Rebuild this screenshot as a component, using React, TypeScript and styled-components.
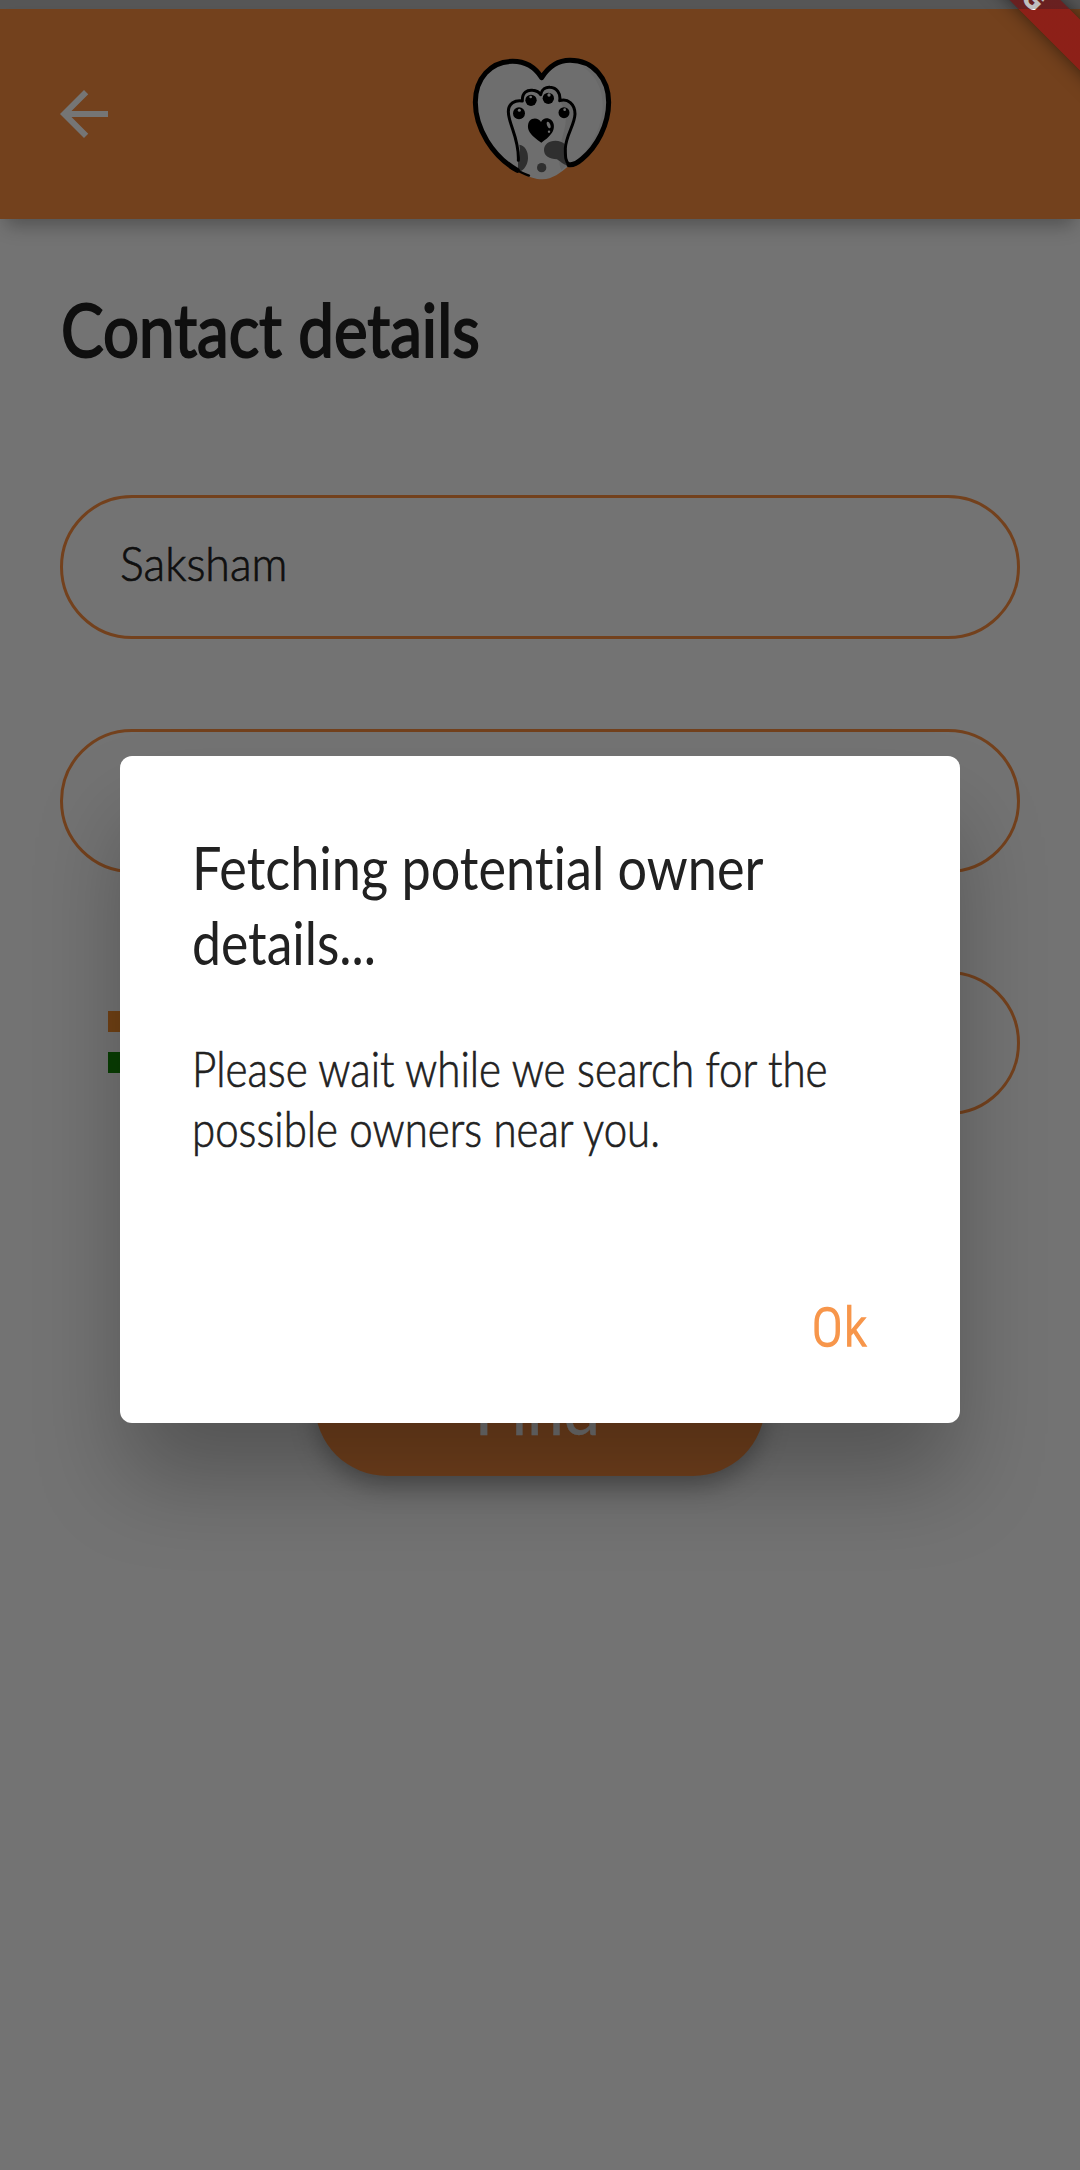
import React from "react";
import styled, { createGlobalStyle } from "styled-components";

const orange = "#fb8e3f";

const GlobalStyle = createGlobalStyle`
  * { box-sizing: border-box; }
  html, body { margin: 0; padding: 0; }
  body {
    background: #fafafa;
    font-family: Lato, "Open Sans", sans-serif;
    font-variant-ligatures: none;
    color: #212121;
    overflow: hidden;
  }
  button { font: inherit; border: 0; padding: 0; background: none; }
`;

const Screen = styled.div`
  position: relative;
  width: 1080px;
  height: 2170px;
  padding-top: 9px;
  overflow: hidden;
  background: #fafafa;
`;

const AppBar = styled.header`
  display: grid;
  grid-template-columns: 72px 1fr 72px;
  align-items: center;
  height: 210px;
  padding: 0 48px;
  background: ${orange};
  box-shadow: 0 12px 18px -6px rgba(0, 0, 0, 0.3);
`;

const BackButton = styled.button`
  display: flex;
  color: #fff;
`;

const LogoSlot = styled.div`
  display: flex;
  justify-content: center;
  padding-top: 7px;
`;

const Content = styled.main`
  display: flex;
  flex-direction: column;
  padding: 65px 60px 0;
`;

const Condensed = styled.span<{ $scale: number; $stroke?: number; $origin?: string }>`
  display: block;
  white-space: nowrap;
  transform: scaleX(${(p) => p.$scale});
  transform-origin: ${(p) => p.$origin ?? "left"};
  -webkit-text-stroke: ${(p) => p.$stroke ?? 0}px currentColor;
  stroke-linejoin: round;
`;

const Heading = styled.h1`
  margin: 0 0 121px;
  padding-left: 1px;
  font-size: 74px;
  line-height: 90px;
  font-weight: 400;
`;

const Field = styled.div<{ $gap: number }>`
  display: flex;
  align-items: center;
  height: 144px;
  margin-bottom: ${(p) => p.$gap}px;
  padding: 0 57px 8px;
  border: 3px solid ${orange};
  border-radius: 72px;
  font-size: 48px;
  line-height: 58px;
  font-weight: 300;
`;

const PhoneRow = styled.div`
  display: flex;
  align-items: center;
  gap: 48px;
  margin-bottom: 217px;
  padding-left: 48px;
`;

const PhoneField = styled(Field)`
  flex: 1;
`;

const Flag = styled.div`
  display: grid;
  grid-template-rows: repeat(3, 1fr);
  width: 96px;
  height: 62px;
  margin-bottom: 2px;
`;

const Stripe = styled.div<{ $color: string }>`
  background: ${(p) => p.$color};
`;

const FindButton = styled.button`
  display: flex;
  align-self: center;
  align-items: center;
  justify-content: center;
  width: 450px;
  height: 144px;
  padding: 12px 5px 0 0;
  border-radius: 72px;
  background: ${orange};
  color: #fff;
  font-size: 66px;
  line-height: 80px;
  box-shadow: 0 12px 27px -3px rgba(0, 0, 0, 0.34);
`;

const Scrim = styled.div`
  position: absolute;
  inset: 0;
  padding: 756px 120px 0;
  background: rgba(0, 0, 0, 0.54);
`;

const Dialog = styled.section`
  display: flex;
  flex-direction: column;
  height: 667px;
  padding: 74px 72px 0;
  border-radius: 12px;
  background: #fff;
  box-shadow: 0 60px 90px -6px rgba(0, 0, 0, 0.27);
`;

const DialogTitle = styled.h2`
  margin: 0 0 58px;
  font-size: 60px;
  line-height: 75px;
  font-weight: 400;
`;

const DialogText = styled.p`
  margin: 0 0 137px;
  font-size: 49px;
  line-height: 60px;
  font-weight: 300;
`;

const DialogAction = styled.button`
  align-self: flex-end;
  margin-right: 20px;
  color: #f7964b;
  font-family: Roboto, sans-serif;
  font-size: 54px;
  font-weight: 300;
  font-stretch: 75%;
  letter-spacing: 1.5px;
  line-height: 66px;
`;

const StatusStrip = styled.div`
  position: absolute;
  inset: 0 0 auto;
  height: 9px;
  background: rgba(0, 0, 0, 0.25);
`;

const DebugRibbon = styled.div`
  position: absolute;
  left: 807px;
  top: -46px;
  display: flex;
  align-items: center;
  justify-content: center;
  width: 400px;
  height: 36px;
  transform: rotate(45deg);
  background: linear-gradient(rgba(183, 28, 28, 0.63), rgba(183, 28, 28, 0.63)),
    rgba(0, 0, 0, 0.4);
  box-shadow: 0 0 18px rgba(0, 0, 0, 0.5);
  color: #fff;
  font: 900 30px/36px Roboto, sans-serif;
`;

function BackArrow() {
  return (
    <svg width="72" height="72" viewBox="0 0 24 24" fill="currentColor">
      <path d="M20 11H7.83l5.59-5.59L12 4l-8 8 8 8 1.41-1.41L7.83 13H20v-2z" />
    </svg>
  );
}

function PawLogo() {
  return (
    <svg width="160" height="145" viewBox="0 0 480 435">
      <path
        d="M245 98C226 64 196 46 158 46C92 46 45 100 45 172C45 255 100 335 180 381C205 396 226 403 248 403C276 403 302 384 328 361C390 345 447 250 447 172C447 100 399 46 330 46C292 46 264 66 245 98Z"
        fill="#f0f0f0"
      />
      <path
        d="M362 62C400 82 428 125 428 180C428 245 393 310 345 351C400 330 442 245 442 176C442 118 410 72 362 62Z"
        fill="#e4e4e4"
      />
      <path
        d="M300 168C320 165 340 178 342 205C337 240 318 270 316 310C316 330 316 345 322 360L304 376C292 350 300 320 304 290C314 245 330 220 300 168Z"
        fill="#dedede"
      />
      <g fill="#666">
        <path d="M178 299C195 302 205 318 204 340C203 360 192 375 180 380L174 374V345C182 330 180 315 178 299Z" />
        <path d="M252 315C252 298 266 287 286 287C298 287 308 291 314 297C313 320 315 345 323 361C310 360 302 350 291 343C268 342 252 333 252 315Z" />
        <circle cx="245" cy="368" r="14" />
      </g>
      <g fill="none" stroke="#000" strokeLinecap="round" strokeLinejoin="round">
        <path
          strokeWidth="15"
          d="M327 359C338 361 352 354 366 342C410 306 446 240 446 172C446 100 399 46 330 46C292 46 264 68 245 98C226 68 196 49 158 49C92 49 46 100 46 172C46 250 98 335 172 376"
        />
        <path strokeWidth="7" d="M160 370C178 380 192 387 207 392" />
        <path
          strokeWidth="9"
          d="M175 346C178 280 146 240 145 200C145 176 165 164 187 168C186 142 202 134 218 136C229 137 237 141 242 149C245 132 258 126 270 127C290 128 303 145 299 167C323 159 345 177 345 207C344 240 318 270 316 310C316 335 316 350 328 360"
        />
      </g>
      <g>
        <circle cx="177" cy="205" r="18" />
        <circle cx="213" cy="166" r="17" />
        <circle cx="265" cy="160" r="17" />
        <circle cx="312" cy="203" r="16.5" />
        <path d="M243 231C250 217 264 217 274 225C284 234 284 252 276 263C267 277 255 284 244 293C231 284 213 272 206 256C201 242 205 227 216 222C227 218 238 222 243 231Z" />
      </g>
      <g fill="#f0f0f0">
        <circle cx="178" cy="196" r="4.5" />
        <circle cx="212" cy="156" r="4" />
        <circle cx="267" cy="150" r="5" />
        <circle cx="314" cy="194" r="4" />
        <ellipse cx="266" cy="240" rx="5" ry="10" transform="rotate(-20 266 240)" />
        <circle cx="267" cy="260" r="3.5" />
      </g>
    </svg>
  );
}

export default function App() {
  return (
    <Screen>
      <GlobalStyle />
      <AppBar>
        <BackButton aria-label="Back">
          <BackArrow />
        </BackButton>
        <LogoSlot>
          <PawLogo />
        </LogoSlot>
      </AppBar>
      <Content>
        <Heading>
          <Condensed $scale={0.861} $stroke={2}>Contact details</Condensed>
        </Heading>
        <Field $gap={90}>
          <Condensed $scale={0.93} $stroke={0.7}>Saksham</Condensed>
        </Field>
        <Field $gap={98} />
        <PhoneRow>
          <Flag>
            <Stripe $color="#f58f2c" />
            <Stripe $color="#fafafa" />
            <Stripe $color="#138808" />
          </Flag>
          <PhoneField $gap={0} />
        </PhoneRow>
        <FindButton>
          <Condensed $scale={0.99} $stroke={0.4} $origin="center">Find</Condensed>
        </FindButton>
      </Content>
      <Scrim>
        <Dialog role="dialog">
          <DialogTitle>
            <Condensed $scale={0.87}>Fetching potential owner</Condensed>
            <Condensed $scale={0.862}>details...</Condensed>
          </DialogTitle>
          <DialogText>
            <Condensed $scale={0.86} $stroke={0.7}>Please wait while we search for the</Condensed>
            <Condensed $scale={0.857} $stroke={0.7}>possible owners near you.</Condensed>
          </DialogText>
          <DialogAction>
            <Condensed $scale={0.97} $stroke={1.5} $origin="right">Ok</Condensed>
          </DialogAction>
        </Dialog>
      </Scrim>
      <DebugRibbon>DEBUG</DebugRibbon>
      <StatusStrip />
    </Screen>
  );
}
